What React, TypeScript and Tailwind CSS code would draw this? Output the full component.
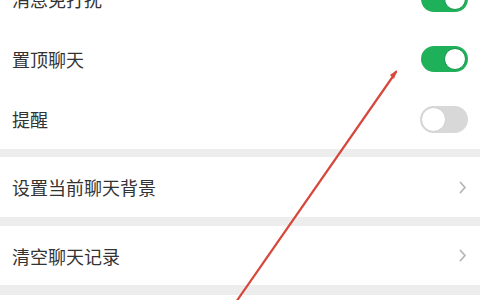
import React from "react";

function Toggle({ on }: { on: boolean }) {
  return on ? (
    <div className="w-[47px] h-[26px] rounded-full bg-[#1fb05a] flex items-center justify-end pr-[2px]">
      <div className="w-[22px] h-[22px] rounded-full bg-white border border-[#18964c]" />
    </div>
  ) : (
    <div className="w-[48px] h-[27px] rounded-full bg-[#d8d8d8] flex items-center justify-start pl-[1px]">
      <div className="w-[25px] h-[25px] rounded-full bg-white border border-[#cfcfcf]" />
    </div>
  );
}

function Chevron() {
  return (
    <svg width="8" height="13" viewBox="0 0 8 13" className="mr-[1px]">
      <path d="M1.5 1.5 L6 6.5 L1.5 11.5" fill="none" stroke="#b5b5b5" strokeWidth="1.8" strokeLinecap="round" strokeLinejoin="round" />
    </svg>
  );
}

function Row({ label, right, h }: { label: string; right: React.ReactNode; h: string }) {
  return (
    <div className={`flex items-center justify-between pl-[12px] pr-[12px] bg-white ${h}`}>
      <span className="text-[18px] leading-none text-[#333333]">{label}</span>
      {right}
    </div>
  );
}

export default function App() {
  return (
    <div
      className="relative w-[480px] h-[300px] overflow-hidden bg-white"
      style={{ fontFamily: '"Noto Sans CJK SC", "Noto Sans", sans-serif' }}
    >
      <div className="flex flex-col mt-[-31px]">
        <Row label="消息免打扰" right={<Toggle on />} h="h-[60px]" />
        <Row label="置顶聊天" right={<Toggle on />} h="h-[60px]" />
        <Row label="提醒" right={<Toggle on={false} />} h="h-[60px]" />
        <div className="h-[8px] bg-[#ededed]" />
        <Row label="设置当前聊天背景" right={<Chevron />} h="h-[60px]" />
        <div className="h-[9px] bg-[#ededed]" />
        <Row label="清空聊天记录" right={<Chevron />} h="h-[59px]" />
        <div className="h-[10px] bg-[#ededed]" />
        <div className="h-[20px] bg-white" />
      </div>
      <svg className="absolute left-0 top-0 pointer-events-none" width="480" height="300" viewBox="0 0 480 300">
        <line x1="396" y1="72" x2="236" y2="302" stroke="#d8473b" strokeWidth="2.2" strokeLinecap="round" />
        <path d="M397 70 L390 75 L394 79 Z" fill="#d8473b" />
      </svg>
    </div>
  );
}
